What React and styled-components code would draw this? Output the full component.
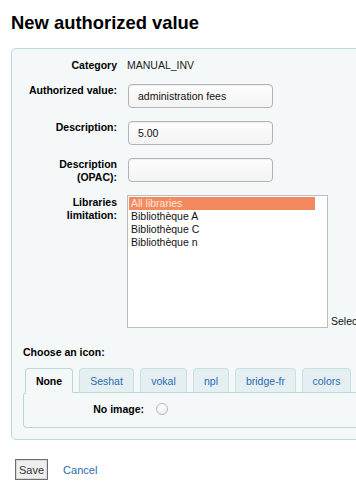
import React from 'react'
import styled, { createGlobalStyle } from 'styled-components'

const Global = createGlobalStyle`
body {
  margin: 0;
  background: #fff;
  font-family: "Liberation Sans", Arial, sans-serif;
  font-size: 10.5px;
  color: #000;
  overflow: hidden;
}
`
const Page = styled.div`
padding-left: 11px;
width: 420px;
`
const Title = styled.h1`
margin: 12px 0 15px 0;
font-size: 18.4px;
font-weight: bold;
line-height: 21px;
color: #000;
`
const Fieldset = styled.div`
background: #f4f8f9;
border: 1px solid #b9d8d9;
border-radius: 5px;
padding: 10px 0 11px 11px;
width: 380px;
`
const Row = styled.div`
display: flex;
align-items: flex-start;
margin-bottom: ${props => props.gap ?? 13}px;
`
const Label = styled.div`
flex-shrink: 0;
width: 94px;
margin-right: 10px;
text-align: right;
font-weight: bold;
line-height: 13px;
padding-top: ${props => props.top || 0}px;
`
const Value = styled.div`
color: #222;
line-height: 12px;
`
const Input = styled.div`
flex-shrink: 0;
box-sizing: border-box;
margin-left: 1px;
width: 145px;
height: 24px;
border: 1px solid #b3b3b3;
border-radius: 4px;
background: linear-gradient(#fdfdfd, #f3f3f3);
padding: 0 9px;
display: flex;
align-items: center;
color: #111;
box-shadow: inset 0 1px 1px rgba(0,0,0,0.06);
`
const SelectWrap = styled.div`
display: flex;
align-items: flex-end;
`
const Select = styled.div`
flex-shrink: 0;
box-sizing: border-box;
width: 201px;
height: 133px;
background: #fff;
border: 1px solid #bdbdbd;
padding: 1px;
`
const Option = styled.div`
width: 186px;
height: 13px;
line-height: 13px;
padding-left: 2px;
box-sizing: border-box;
background: ${props => props.selected ? '#f38a5f' : 'transparent'};
color: ${props => props.selected ? '#fde6dc' : '#111'};
white-space: nowrap;
`
const Hint = styled.span`
margin-left: 3px;
padding-bottom: 1px;
white-space: nowrap;
color: #111;
line-height: 12px;
`
const Section = styled.div`
font-weight: bold;
line-height: 12px;
margin: 18px 0 10px 0;
`
const Tabs = styled.div`
display: flex;
padding-left: 2px;
gap: 6px;
position: relative;
z-index: 1;
margin-bottom: -1px;
`
const Tab = styled.div`
flex-shrink: 0;
width: ${props => props.w}px;
height: 25px;
box-sizing: border-box;
border: 1px solid ${props => props.active ? '#b9d8d9' : '#c8e0e2'};
border-bottom: ${props => props.active ? '1px solid #f4f8f9' : '1px solid #b9d8d9'};
border-radius: 4px 4px 0 0;
background: ${props => props.active ? '#f4f8f9' : '#e5eff1'};
color: ${props => props.active ? '#000' : '#2a6bb3'};
font-weight: ${props => props.active ? 'bold' : 'normal'};
display: flex;
align-items: center;
justify-content: center;
white-space: nowrap;
`
const Panel = styled.div`
border: 1px solid #b9d8d9;
border-right: none;
border-radius: 4px 0 0 4px;
background: #f4f8f9;
padding: 10px 0 12px 0;
`
const PanelRow = styled.div`
display: flex;
align-items: center;
`
const PanelLabel = styled.div`
width: 120px;
text-align: right;
font-weight: bold;
margin-right: 12px;
`
const Radio = styled.span`
width: 12px;
height: 12px;
box-sizing: border-box;
border-radius: 50%;
border: 1px solid #b5b5b5;
background: linear-gradient(#fff, #f0f0f0);
`
const Actions = styled.div`
display: flex;
align-items: center;
margin: 19px 0 0 4px;
font-size: 11px;
`
const Button = styled.div`
box-sizing: border-box;
height: 21px;
padding: 0 3px;
border: 1px solid #6e6e6e;
box-shadow: inset 0 0 0 1px #d8d8d8;
background: #efefef;
color: #333;
display: flex;
align-items: center;
`
const Link = styled.a`
margin-left: 15px;
color: #2a6bb3;
text-decoration: none;
`

const tabs = [
  { name: 'None', active: true, w: 48 },
  { name: 'Seshat', w: 55 },
  { name: 'vokal', w: 47 },
  { name: 'npl', w: 36 },
  { name: 'bridge-fr', w: 61 },
  { name: 'colors', w: 49 },
]

const App = () => {
  return (
    <Page>
      <Global />
      <Title>New authorized value</Title>
      <Fieldset>
        <Row gap={12}>
          <Label>Category</Label>
          <Value>MANUAL_INV</Value>
        </Row>
        <Row>
          <Label top={-1}>Authorized value:</Label>
          <Input>administration fees</Input>
        </Row>
        <Row>
          <Label top={-1}>Description:</Label>
          <Input>5.00</Input>
        </Row>
        <Row gap={11}>
          <Label top={-1}>Description (OPAC):</Label>
          <Input />
        </Row>
        <Row gap={0}>
          <Label top={1}>Libraries limitation:</Label>
          <SelectWrap>
            <Select>
              <Option selected>All libraries</Option>
              <Option>Bibliothèque A</Option>
              <Option>Bibliothèque C</Option>
              <Option>Bibliothèque n</Option>
            </Select>
            <Hint>Select multiple libraries or leave blank for all.</Hint>
          </SelectWrap>
        </Row>
        <Section>Choose an icon:</Section>
        <Tabs>
          {tabs.map(t => (
            <Tab key={t.name} active={t.active} w={t.w}>{t.name}</Tab>
          ))}
        </Tabs>
        <Panel>
          <PanelRow>
            <PanelLabel>No image:</PanelLabel>
            <Radio />
          </PanelRow>
        </Panel>
      </Fieldset>
      <Actions>
        <Button>Save</Button>
        <Link href="#">Cancel</Link>
      </Actions>
    </Page>
  )
}

export default App
